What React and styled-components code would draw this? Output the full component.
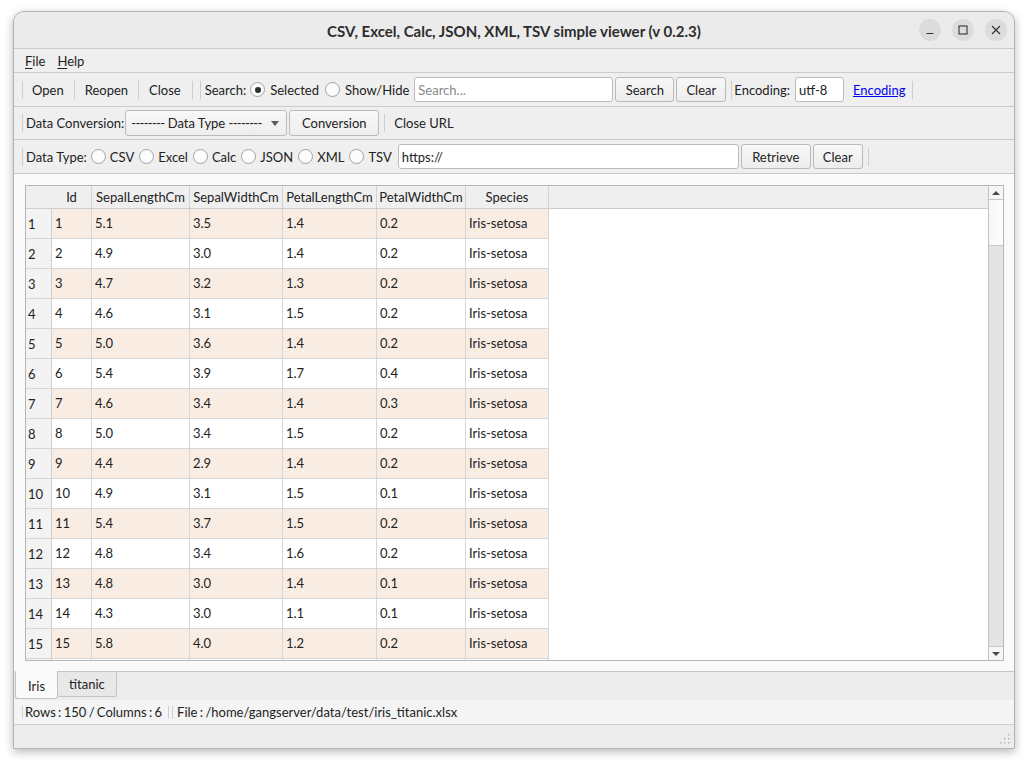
import React from 'react';
import styled, { createGlobalStyle } from 'styled-components';

const Global = createGlobalStyle`
  html, body { margin: 0; padding: 0; background: #ffffff; }
  body { font-family: Lato, "Noto Sans", sans-serif; font-size: 13px; color: #222; }
  * { box-sizing: border-box; }
`;

const Page = styled.div`
  padding: 11px 0 0 13px;
  height: 766px;
`;

const Window = styled.div`
  width: 1002px;
  height: 738px;
  border: 1px solid #b3b3b3;
  border-radius: 11px 11px 0 0;
  background: #efefef;
  box-shadow: 0 3px 10px rgba(0, 0, 0, 0.28);
  display: flex;
  flex-direction: column;
  overflow: hidden;
`;

const TitleBar = styled.div`
  height: 37px;
  flex-shrink: 0;
  background: #ebebeb;
  border-bottom: 1px solid #cacaca;
  display: grid;
  grid-template-columns: 1fr auto 1fr;
  align-items: center;
`;

const Title = styled.div`
  grid-column: 2;
  font-weight: 700;
  font-size: 15px;
  color: #2d2d2d;
  padding-top: 1px;
`;

const Controls = styled.div`
  grid-column: 3;
  justify-self: end;
  display: flex;
  gap: 11px;
  padding-right: 7px;
`;

const CtrlBtn = styled.div`
  width: 22px;
  height: 22px;
  border-radius: 50%;
  background: #dcdcdc;
  display: flex;
  align-items: center;
  justify-content: center;
`;

const MenuBar = styled.div`
  height: 23px;
  flex-shrink: 0;
  display: flex;
  align-items: center;
  padding-left: 5px;
`;

const MenuItem = styled.div`
  padding: 0 6px;
  color: #222;
  u { text-decoration-thickness: 1px; text-underline-offset: 2px; }
`;

const Toolbar = styled.div`
  height: ${p => p.$h || 34}px;
  flex-shrink: 0;
  border-top: 1px solid #cbcbcb;
  display: flex;
  align-items: center;
  padding-left: 8px;
  white-space: nowrap;
`;

const Handle = styled.div`
  width: 1px;
  height: 18px;
  background: #cdcdcd;
  margin-left: ${p => p.$ml || 0}px;
  margin-right: ${p => p.$mr || 0}px;
  flex-shrink: 0;
`;

const FlatButton = styled.div`
  padding: 0 ${p => p.$px || 9}px;
  color: #222;
`;

const Label = styled.span`
  margin-left: ${p => p.$ml || 0}px;
  color: #222;
`;

const RadioItem = styled.label`
  display: flex;
  align-items: center;
  gap: ${p => p.$gap || 4}px;
  margin-left: ${p => p.$ml || 0}px;
`;

const RadioCircle = styled.span`
  width: 15px;
  height: 15px;
  border-radius: 50%;
  border: 1px solid #a2a2a2;
  background: #fcfcfc;
  display: flex;
  align-items: center;
  justify-content: center;
  flex-shrink: 0;
  &::after {
    content: '';
    width: 6px;
    height: 6px;
    border-radius: 50%;
    background: ${p => (p.$checked ? '#2f2f2f' : 'transparent')};
  }
`;

const TextInput = styled.div`
  width: ${p => p.$w}px;
  height: ${p => p.$h || 25}px;
  margin-left: ${p => p.$ml || 0}px;
  border: 1px solid #bcbcbc;
  border-radius: 3px;
  background: #ffffff;
  display: flex;
  align-items: center;
  padding-left: 3px;
  color: ${p => (p.$placeholder ? '#8a8a8a' : '#222')};
  flex-shrink: 0;
`;

const PushButton = styled.div`
  width: ${p => p.$w}px;
  height: ${p => p.$h || 25}px;
  margin-left: ${p => p.$ml || 2}px;
  border: 1px solid #bababa;
  border-radius: 3px;
  background: linear-gradient(#f8f8f8, #ededed);
  display: flex;
  align-items: center;
  justify-content: center;
  color: #222;
  flex-shrink: 0;
`;

const Combo = styled.div`
  width: 162px;
  height: 26px;
  margin-left: 1px;
  border: 1px solid #bababa;
  border-radius: 3px;
  background: linear-gradient(#f8f8f8, #ededed);
  display: flex;
  align-items: center;
  justify-content: space-between;
  padding: 0 7px 0 5px;
  color: #222;
  flex-shrink: 0;
`;

const Dashes = styled.span`
  letter-spacing: -0.7px;
`;

const ComboArrow = styled.span`
  width: 0;
  height: 0;
  border-left: 4px solid transparent;
  border-right: 4px solid transparent;
  border-top: 5px solid #5a5a5a;
`;

const Link = styled.span`
  color: #0000ee;
  text-decoration: underline;
  margin-left: ${p => p.$ml || 0}px;
`;

const Pane = styled.div`
  flex: 1 1 0;
  min-height: 0;
  background: #fafafa;
  border-top: 1px solid #c8c8c8;
  padding: 11px 10px 10px 11px;
  display: flex;
`;

const Frame = styled.div`
  flex: 1;
  border: 1px solid #b6b6b6;
  background: #ffffff;
  display: flex;
  overflow: hidden;
`;

const Viewport = styled.div`
  flex: 1;
  min-height: 0;
  overflow: hidden;
  display: flex;
  flex-direction: column;
`;

const HeaderRow = styled.div`
  height: 23px;
  flex-shrink: 0;
  display: flex;
  background: #efefef;
  border-bottom: 1px solid #cdcdcd;
`;

const HeaderCell = styled.div`
  width: ${p => p.$w}px;
  flex-shrink: 0;
  text-align: center;
  line-height: 22px;
  color: #222;
  border-right: ${p => (p.$corner ? 'none' : '1px solid #d3d3d3')};
`;

const Row = styled.div`
  height: 30px;
  flex-shrink: 0;
  display: flex;
`;

const RowHead = styled.div`
  width: 26px;
  flex-shrink: 0;
  background: #f3f3f3;
  border-right: 1px solid #cfcfcf;
  border-bottom: 1px solid #d6d6d6;
  padding: 1px 0 0 2px;
  line-height: 29px;
  color: #222;
`;

const Cell = styled.div`
  width: ${p => p.$w}px;
  flex-shrink: 0;
  background: ${p => (p.$alt ? '#f9ede3' : '#ffffff')};
  border-right: 1px solid #d6d6d6;
  border-bottom: 1px solid #d6d6d6;
  padding-left: 3px;
  line-height: 29px;
  color: #222;
`;

const ScrollBar = styled.div`
  width: 15px;
  flex-shrink: 0;
  border-left: 1px solid #c2c2c2;
  display: flex;
  flex-direction: column;
  background: #e4e4e4;
`;

const ScrollArrow = styled.div`
  height: 14px;
  flex-shrink: 0;
  background: #f6f6f6;
  border-bottom: ${p => (p.$up ? '1px solid #c6c6c6' : 'none')};
  border-top: ${p => (p.$up ? 'none' : '1px solid #c6c6c6')};
  display: flex;
  align-items: center;
  justify-content: center;
  &::after {
    content: '';
    width: 0;
    height: 0;
    border-left: 4px solid transparent;
    border-right: 4px solid transparent;
    ${p => (p.$up ? 'border-bottom: 4px solid #4a4a4a;' : 'border-top: 4px solid #4a4a4a;')}
  }
`;

const ScrollThumb = styled.div`
  height: 46px;
  flex-shrink: 0;
  background: linear-gradient(90deg, #f7f7f7, #fdfdfd);
  border-bottom: 1px solid #c6c6c6;
`;

const ScrollTrack = styled.div`
  flex: 1;
  background: #e4e4e4;
`;

const TabBar = styled.div`
  height: 29px;
  flex-shrink: 0;
  background: #ececec;
  display: flex;
  align-items: stretch;
  padding-left: 1px;
`;

const Tab = styled.div`
  display: flex;
  align-items: center;
  padding: 0 ${p => (p.$active ? 12 : 11)}px;
  padding-top: ${p => (p.$active ? 2 : 0)}px;
  margin-bottom: ${p => (p.$active ? 1 : 3)}px;
  background: ${p => (p.$active ? '#fafafa' : '#e8e8e8')};
  border: 1px solid #c3c3c3;
  border-top: ${p => (p.$active ? '1px solid #fafafa' : '1px solid #c4c4c4')};
  border-radius: 0 0 3px 3px;
  color: #222;
  margin-left: ${p => (p.$active ? 0 : -1)}px;
`;

const TabFill = styled.div`
  flex: 1;
  border-top: 1px solid #c4c4c4;
  margin-left: -1px;
`;

const StatusTools = styled.div`
  height: 25px;
  flex-shrink: 0;
  background: #f4f4f4;
  border-bottom: 1px solid #cdcdcd;
  display: flex;
  align-items: center;
  padding-left: 8px;
`;

const StatusText = styled.span`
  word-spacing: ${p => p.$ws || 0}px;
  color: #222;
`;

const SmallHandle = styled.div`
  width: 1px;
  height: 13px;
  background: #d0d0d0;
  margin-left: ${p => p.$ml || 0}px;
  margin-right: ${p => p.$mr || 0}px;
`;

const StatusBar = styled.div`
  height: 23px;
  flex-shrink: 0;
  background: #ececec;
  display: flex;
  justify-content: flex-end;
  align-items: flex-end;
  padding: 0 3px 3px 0;
`;

const columns = [
  { key: 'Id', w: 40 },
  { key: 'SepalLengthCm', w: 98 },
  { key: 'SepalWidthCm', w: 93 },
  { key: 'PetalLengthCm', w: 94 },
  { key: 'PetalWidthCm', w: 89 },
  { key: 'Species', w: 83 },
];

const data = [
  ['1', '5.1', '3.5', '1.4', '0.2'],
  ['2', '4.9', '3.0', '1.4', '0.2'],
  ['3', '4.7', '3.2', '1.3', '0.2'],
  ['4', '4.6', '3.1', '1.5', '0.2'],
  ['5', '5.0', '3.6', '1.4', '0.2'],
  ['6', '5.4', '3.9', '1.7', '0.4'],
  ['7', '4.6', '3.4', '1.4', '0.3'],
  ['8', '5.0', '3.4', '1.5', '0.2'],
  ['9', '4.4', '2.9', '1.4', '0.2'],
  ['10', '4.9', '3.1', '1.5', '0.1'],
  ['11', '5.4', '3.7', '1.5', '0.2'],
  ['12', '4.8', '3.4', '1.6', '0.2'],
  ['13', '4.8', '3.0', '1.4', '0.1'],
  ['14', '4.3', '3.0', '1.1', '0.1'],
  ['15', '5.8', '4.0', '1.2', '0.2'],
];

const Grip = () => (
  <svg width="12" height="12" viewBox="0 0 12 12">
    {[
      [10, 2], [10, 6], [10, 10], [6, 6], [6, 10], [2, 10],
    ].map(([x, y], i) => (
      <rect key={i} x={x - 1} y={y - 1} width="1.5" height="1.5" fill="#b8b8b8" />
    ))}
  </svg>
);

export default function App() {
  return (
    <Page>
      <Global />
      <Window>
        <TitleBar>
          <Title>CSV, Excel, Calc, JSON, XML, TSV simple viewer (v 0.2.3)</Title>
          <Controls>
            <CtrlBtn>
              <svg width="10" height="10" viewBox="0 0 10 10">
                <line x1="1.5" y1="8.5" x2="8.5" y2="8.5" stroke="#333" strokeWidth="1.2" />
              </svg>
            </CtrlBtn>
            <CtrlBtn>
              <svg width="10" height="10" viewBox="0 0 10 10">
                <rect x="1" y="1" width="8" height="8" fill="none" stroke="#333" strokeWidth="1.1" />
              </svg>
            </CtrlBtn>
            <CtrlBtn>
              <svg width="10" height="10" viewBox="0 0 10 10">
                <path d="M1 1 L9 9 M9 1 L1 9" stroke="#333" strokeWidth="1.2" />
              </svg>
            </CtrlBtn>
          </Controls>
        </TitleBar>

        <MenuBar>
          <MenuItem><u>F</u>ile</MenuItem>
          <MenuItem><u>H</u>elp</MenuItem>
        </MenuBar>

        <Toolbar $h={34}>
          <Handle />
          <FlatButton>Open</FlatButton>
          <Handle $ml={1} $mr={1} />
          <FlatButton>Reopen</FlatButton>
          <Handle $ml={1} $mr={1} />
          <FlatButton>Close</FlatButton>
          <Handle $ml={2} />
          <Handle $ml={7} />
          <Label $ml={4}>Search:</Label>
          <RadioItem $ml={4} $gap={5}><RadioCircle $checked />Selected</RadioItem>
          <RadioItem $ml={6} $gap={5}><RadioCircle />Show/Hide</RadioItem>
          <TextInput $w={199} $ml={5} $placeholder>Search...</TextInput>
          <PushButton $w={59}>Search</PushButton>
          <PushButton $w={50}>Clear</PushButton>
          <Handle $ml={5} />
          <Label $ml={2}>Encoding:</Label>
          <TextInput $w={49} $ml={5}>utf-8</TextInput>
          <Link $ml={9}>Encoding</Link>
          <Handle $ml={6} />
        </Toolbar>

        <Toolbar $h={33}>
          <Handle />
          <Label $ml={3}>Data Conversion:</Label>
          <Combo>
            <span><Dashes>--------</Dashes> Data Type <Dashes>--------</Dashes></span>
            <ComboArrow />
          </Combo>
          <PushButton $w={90} $h={26}>Conversion</PushButton>
          <Handle $ml={5} />
          <FlatButton $px={9}>Close URL</FlatButton>
        </Toolbar>

        <Toolbar $h={34}>
          <Handle />
          <Label $ml={3}>Data Type:</Label>
          <RadioItem $ml={4}><RadioCircle />CSV</RadioItem>
          <RadioItem $ml={5}><RadioCircle />Excel</RadioItem>
          <RadioItem $ml={5}><RadioCircle />Calc</RadioItem>
          <RadioItem $ml={5}><RadioCircle />JSON</RadioItem>
          <RadioItem $ml={5}><RadioCircle />XML</RadioItem>
          <RadioItem $ml={5}><RadioCircle />TSV</RadioItem>
          <TextInput $w={341} $ml={6}>https://</TextInput>
          <PushButton $w={70}>Retrieve</PushButton>
          <PushButton $w={50}>Clear</PushButton>
          <Handle $ml={5} />
        </Toolbar>

        <Pane>
          <Frame>
            <Viewport>
              <HeaderRow>
                <HeaderCell $w={26} $corner />
                {columns.map(c => (
                  <HeaderCell key={c.key} $w={c.w}>{c.key}</HeaderCell>
                ))}
              </HeaderRow>
              {data.map((r, i) => (
                <Row key={r[0]}>
                  <RowHead>{i + 1}</RowHead>
                  {r.map((v, j) => (
                    <Cell key={j} $w={columns[j].w} $alt={i % 2 === 0}>{v}</Cell>
                  ))}
                  <Cell $w={83} $alt={i % 2 === 0}>Iris-setosa</Cell>
                </Row>
              ))}
              <Row>
                <RowHead />
                {columns.map(c => (
                  <Cell key={c.key} $w={c.w} />
                ))}
              </Row>
            </Viewport>
            <ScrollBar>
              <ScrollArrow $up />
              <ScrollThumb />
              <ScrollTrack />
              <ScrollArrow />
            </ScrollBar>
          </Frame>
        </Pane>

        <TabBar>
          <Tab $active>Iris</Tab>
          <Tab>titanic</Tab>
          <TabFill />
        </TabBar>

        <StatusTools>
          <SmallHandle $mr={2} />
          <StatusText $ws={-1}>Rows : 150 / Columns : 6</StatusText>
          <SmallHandle $ml={6} />
          <SmallHandle $ml={3} $mr={4} />
          <StatusText $ws={-1}>File : /home/gangserver/data/test/iris_titanic.xlsx</StatusText>
        </StatusTools>

        <StatusBar>
          <Grip />
        </StatusBar>
      </Window>
    </Page>
  );
}
